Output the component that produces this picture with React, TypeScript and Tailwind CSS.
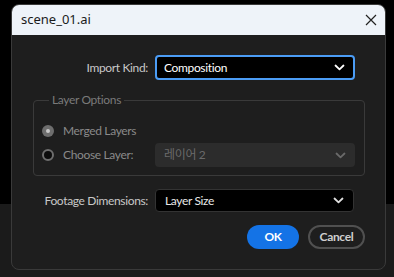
import React from 'react';

const Chevron: React.FC<{ className?: string }> = ({ className }) => (
  <svg width="11" height="7" viewBox="0 0 11 7" className={className} fill="none">
    <path d="M1.5 1.5 L5.5 5.3 L9.5 1.5" stroke="currentColor" strokeWidth="1.8" strokeLinecap="round" strokeLinejoin="round" />
  </svg>
);

const App: React.FC = () => {
  return (
    <div
      className="h-[277px] w-[394px] overflow-hidden bg-[linear-gradient(to_bottom,#000_204px,#1b1b1b_204px)] pt-[4px] pl-[11px]"
      style={{ fontFamily: 'Lato, "Noto Sans", sans-serif' }}
    >
      <div className="w-[375px] h-[266px] rounded-[8px] border border-[#3a3a3a] bg-[#1e1e1e] overflow-hidden flex flex-col tracking-[-0.35px]">
        {/* Title bar */}
        <div
          className="h-[30px] bg-[#eef3f9] flex items-center justify-between pl-[9px] pr-[8px] text-[13px] tracking-normal text-[#1b1b1b]"
          style={{ fontFamily: '"Noto Sans", sans-serif' }}
        >
          <span>scene_01.ai</span>
          <svg width="12" height="12" viewBox="0 0 12 12" className="text-[#222]">
            <path d="M1 1 L11 11 M11 1 L1 11" stroke="currentColor" strokeWidth="1.2" />
          </svg>
        </div>

        {/* Import kind */}
        <div className="flex items-center mt-[20px]">
          <span className="w-[136px] text-right text-[12px] text-[#c8c8c8]">Import Kind:</span>
          <div className="ml-[7px] w-[200px] h-[25px] rounded-[4px] border-2 border-[#4b9cf5] bg-black flex items-center justify-between pl-[7px] pr-[8px] text-[12px] text-white">
            <span>Composition</span>
            <Chevron className="text-white" />
          </div>
        </div>

        {/* Layer options */}
        <fieldset className="ml-[21px] mt-[13px] w-[332px] rounded-[4px] border border-[#3a3a3a] pl-[8px] pr-[9px] pb-[8px]">
          <legend className="ml-[7px] px-[3px] text-[12px] leading-[14px] text-[#7a7a7a]">Layer Options</legend>
          <div className="mt-[12px] h-[24px] flex items-center">
            <span className="w-[12px] h-[12px] rounded-full bg-[#6e6e6e] flex items-center justify-center">
              <span className="w-[4px] h-[4px] rounded-full bg-[#c8c8c8]"></span>
            </span>
            <span className="ml-[9px] text-[12px] text-[#8a8a8a]">Merged Layers</span>
          </div>
          <div className="h-[24px] flex items-center">
            <span className="w-[12px] h-[12px] rounded-full border-2 border-[#6e6e6e] bg-[#0c0c0c]"></span>
            <span className="ml-[9px] w-[92px] text-[12px] text-[#8a8a8a]">Choose Layer:</span>
            <div
              className="w-[200px] h-[24px] rounded-[4px] bg-[#2c2c2c] flex items-center justify-between pl-[9px] pr-[9px] text-[12px] text-[#6a6a6a]"
              style={{ fontFamily: 'Lato, "Noto Sans CJK KR", sans-serif' }}
            >
              <span>레이어 2</span>
              <Chevron className="text-[#6a6a6a]" />
            </div>
          </div>
        </fieldset>

        {/* Footage dimensions */}
        <div className="flex items-center mt-[13px]">
          <span className="w-[136px] text-right text-[12px] text-[#c8c8c8]">Footage Dimensions:</span>
          <div className="ml-[7px] w-[199px] h-[23px] rounded-[4px] border border-[#333] bg-black flex items-center justify-between pl-[9px] pr-[9px] text-[12px] text-[#e8e8e8]">
            <span>Layer Size</span>
            <Chevron className="text-[#e0e0e0]" />
          </div>
        </div>

        {/* Buttons */}
        <div className="flex justify-end gap-[9px] mt-[13px] pr-[20px]">
          <button className="w-[52px] h-[24px] rounded-full bg-[#1473e6] text-[12px] font-bold text-white">OK</button>
          <button className="w-[57px] h-[24px] rounded-full border-2 border-[#505050] text-[12px] font-bold text-[#cfcfcf]">Cancel</button>
        </div>
      </div>
    </div>
  );
};

export default App;
